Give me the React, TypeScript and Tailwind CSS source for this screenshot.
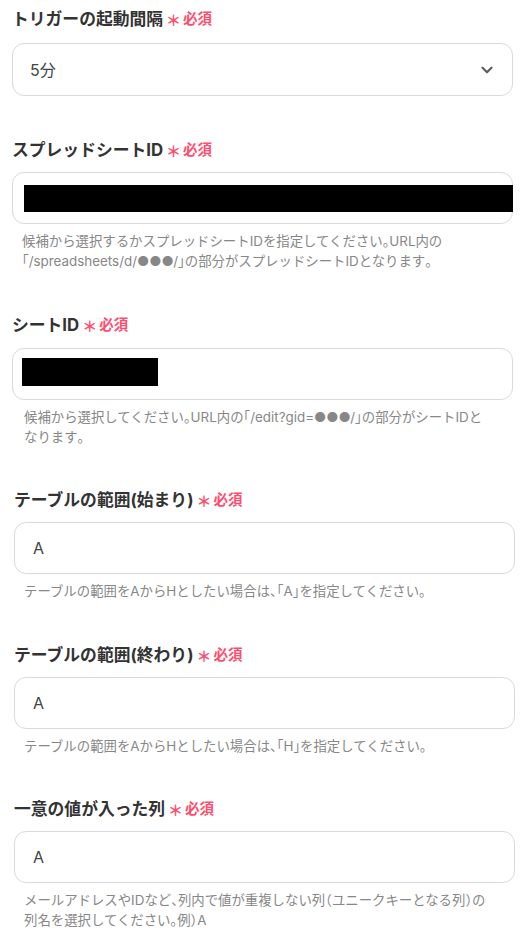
import React from "react";

const RED = "text-[#ff4d6d]";
const PUNCT = /([、。「」（）])/;

// 約物だけ半角にする（参考画像の詰め組みに合わせる）
function Tight({ text }: { text: string }) {
  return (
    <>
      {text.split(PUNCT).map((part, i) =>
        PUNCT.test(part) ? (
          <span key={i} className="[font-feature-settings:'halt']">
            {part}
          </span>
        ) : (
          <React.Fragment key={i}>{part}</React.Fragment>
        )
      )}
    </>
  );
}

function Label({ text }: { text: string }) {
  return (
    <div className="flex h-[24px] items-center">
      <span className="text-[16.8px] font-bold leading-[24px] text-[#333333]">{text}</span>
      <span className={`ml-[3px] text-[15px] font-bold leading-[24px] translate-y-[2px] ${RED}`}>＊</span>
      <span className={`ml-[2px] text-[14.5px] font-semibold leading-[24px] ${RED}`}>必須</span>
    </div>
  );
}

function Helper({ lines, pad }: { lines: string[]; pad: string }) {
  return (
    <div className={`mt-[7px] ${pad} text-[13.4px] leading-[20px] text-[#878787]`}>
      {lines.map((l) => (
        <div key={l} className="whitespace-nowrap">
          <Tight text={l} />
        </div>
      ))}
    </div>
  );
}

function ChevronDown() {
  return (
    <svg width="18" height="18" viewBox="0 0 24 24" fill="none" stroke="#5f5f5f" strokeWidth="3" strokeLinecap="round" strokeLinejoin="round">
      <path d="M6 9l6 6 6-6" />
    </svg>
  );
}

export default function App() {
  return (
    <div className="w-[531px] min-h-[939px] bg-white pt-[7px] font-['Inter','Noto_Sans_CJK_JP',sans-serif]">
      {/* トリガーの起動間隔 */}
      <div className="pl-[12px] pr-[18px]">
        <Label text="トリガーの起動間隔" />
        <div className="mt-[12px] flex h-[53px] items-center justify-between rounded-[12px] border border-[#d6dae1] pl-[17px] pr-[16px]">
          <span className="text-[16px] text-[#444]">5分</span>
          <ChevronDown />
        </div>
      </div>

      {/* スプレッドシートID */}
      <div className="mt-[42px] pl-[12px] pr-[18px]">
        <Label text="スプレッドシートID" />
        <div className="mt-[10px] flex h-[52px] items-center rounded-[12px] border border-[#d6dae1] pl-[11px]">
          <div className="h-[27px] flex-1 bg-black mr-[-1px]" />
        </div>
        <Helper
          pad="pl-[10px]"
          lines={[
            "候補から選択するかスプレッドシートIDを指定してください。URL内の",
            "「/spreadsheets/d/●●●/」の部分がスプレッドシートIDとなります。",
          ]}
        />
      </div>

      {/* シートID */}
      <div className="mt-[42px] pl-[12px] pr-[18px]">
        <Label text="シートID" />
        <div className="mt-[11px] flex h-[52px] items-center rounded-[12px] border border-[#d6dae1] pl-[9px]">
          <div className="h-[28px] w-[136px] bg-black -translate-y-[2px]" />
        </div>
        <Helper
          pad="pl-[12px]"
          lines={[
            "候補から選択してください。URL内の「/edit?gid=●●●/」の部分がシートIDと",
            "なります。",
          ]}
        />
      </div>

      {/* テーブルの範囲(始まり) */}
      <div className="mt-[41px] pl-[14px] pr-[16px]">
        <Label text="テーブルの範囲(始まり)" />
        <div className="mt-[10px] flex h-[52px] items-center rounded-[12px] border border-[#d6dae1] pl-[18px]">
          <span className="text-[16px] text-[#444]">A</span>
        </div>
        <Helper pad="pl-[10px]" lines={["テーブルの範囲をAからHとしたい場合は、「A」を指定してください。"]} />
      </div>

      {/* テーブルの範囲(終わり) */}
      <div className="mt-[42px] pl-[14px] pr-[16px]">
        <Label text="テーブルの範囲(終わり)" />
        <div className="mt-[10px] flex h-[52px] items-center rounded-[12px] border border-[#d6dae1] pl-[18px]">
          <span className="text-[16px] text-[#444]">A</span>
        </div>
        <Helper pad="pl-[10px]" lines={["テーブルの範囲をAからHとしたい場合は、「H」を指定してください。"]} />
      </div>

      {/* 一意の値が入った列 */}
      <div className="mt-[41px] pl-[14px] pr-[16px]">
        <Label text="一意の値が入った列" />
        <div className="mt-[10px] flex h-[52px] items-center rounded-[12px] border border-[#d6dae1] pl-[18px]">
          <span className="text-[16px] text-[#444]">A</span>
        </div>
        <Helper
          pad="pl-[10px]"
          lines={[
            "メールアドレスやIDなど、列内で値が重複しない列（ユニークキーとなる列）の",
            "列名を選択してください。例）A",
          ]}
        />
      </div>
    </div>
  );
}
